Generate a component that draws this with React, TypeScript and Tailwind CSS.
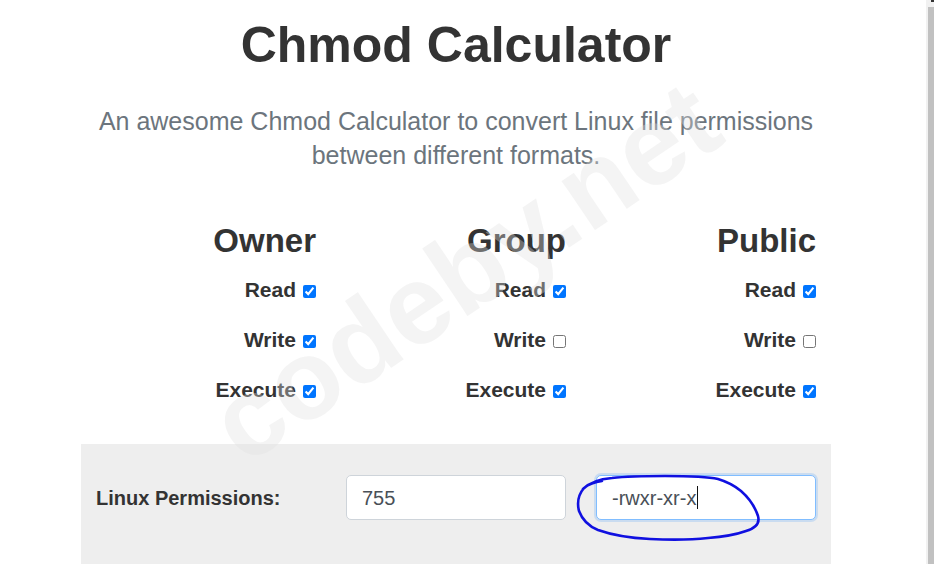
import React from "react";

type Perm = { label: string; checked: boolean };
type Group = { title: string; perms: Perm[] };

const groups: Group[] = [
  {
    title: "Owner",
    perms: [
      { label: "Read", checked: true },
      { label: "Write", checked: true },
      { label: "Execute", checked: true },
    ],
  },
  {
    title: "Group",
    perms: [
      { label: "Read", checked: true },
      { label: "Write", checked: false },
      { label: "Execute", checked: true },
    ],
  },
  {
    title: "Public",
    perms: [
      { label: "Read", checked: true },
      { label: "Write", checked: false },
      { label: "Execute", checked: true },
    ],
  },
];

function PermColumn({ group }: { group: Group }) {
  return (
    <div className="px-[15px] text-right">
      <h3 className="text-[33px] leading-[40px] font-bold text-[#333]">{group.title}</h3>
      <div className="mt-[3px]">
        {group.perms.map((p) => (
          <label
            key={p.label}
            className="flex flex-row items-center justify-end gap-[7px] h-[50px] pt-[1px] text-[21px] leading-[24px] font-bold text-[#333]"
          >
            {p.label}
            <input
              type="checkbox"
              checked={p.checked}
              readOnly
              className="w-[13px] h-[13px] m-0 mt-[3px]"
            />
          </label>
        ))}
      </div>
    </div>
  );
}

function Scribble() {
  // hand-drawn blue ring around the symbolic field
  return (
    <svg
      className="absolute left-[570px] top-[468px] pointer-events-none"
      width="200"
      height="80"
      viewBox="570 468 200 80"
      fill="none"
    >
      <path
        d="M583 489 C590 482 600 479 612 478 C630 476 650 476 665 476 C685 476 705 476 718 479 C728 482 735 486 741 491 C749 498 755 507 758 516 C760 523 756 528 746 531 C735 535 722 537 708 538 C690 540 670 540 650 539 C630 538 612 535 598 530 C588 526 582 519 579 511 C577 503 578 495 584 488 C589 484 595 482 602 481"
        stroke="#1010e0"
        strokeWidth="2.6"
        strokeLinecap="round"
      />
    </svg>
  );
}

export default function App() {
  return (
    <div className="relative w-[934px] h-[564px] overflow-hidden flex flex-row bg-white font-['Liberation_Sans',Arial,sans-serif]">
      <div className="flex-1">
        <div className="w-[750px] ml-[81px]">
          <h1 className="pt-[15px] text-[50px] leading-[60px] font-bold text-center text-[#333]">
            Chmod Calculator
          </h1>
          <p className="mt-[29px] text-[25px] leading-[34px] text-center text-[#6c757d]">
            An awesome Chmod Calculator to convert Linux file permissions between different formats.
          </p>

          <div className="mt-[49px] grid grid-cols-3">
            {groups.map((g) => (
              <PermColumn key={g.title} group={g} />
            ))}
          </div>

          <div className="mt-[30px] h-[160px] bg-[#eeeeee] pt-[31px] grid grid-cols-3 items-start">
            <div className="px-[15px] h-[45px] flex items-center text-[20px] font-bold text-[#333]">
              Linux Permissions:
            </div>
            <div className="px-[15px]">
              <div className="h-[45px] flex items-center px-[15px] bg-white border border-[#ced4da] rounded-[5px] text-[20px] text-[#495057]">
                755
              </div>
            </div>
            <div className="px-[15px]">
              <div className="h-[45px] flex items-center px-[15px] bg-white border border-[#80bdff] rounded-[5px] shadow-[0_0_0_2px_rgba(0,123,255,0.15)] text-[20px] text-[#495057]">
                -rwxr-xr-x
                <span className="w-px h-[23px] bg-[#111] ml-[1px]" />
              </div>
            </div>
          </div>
        </div>
      </div>

      <div className="w-[8px] flex flex-col bg-[#f1f1f1]">
        <div className="h-[7px] flex justify-end">
          <div className="w-[3px] h-[2px] bg-[#333]" />
        </div>
        <div className="flex-1 ml-[2px] bg-[#c1c1c1]" />
      </div>

      <div className="absolute left-[465px] top-[272px] -translate-x-1/2 -translate-y-1/2 -rotate-[34deg] pointer-events-none text-[112px] leading-none font-bold text-[#e0e0e0] opacity-35 whitespace-nowrap">
        codeby.net
      </div>

      <Scribble />
    </div>
  );
}
